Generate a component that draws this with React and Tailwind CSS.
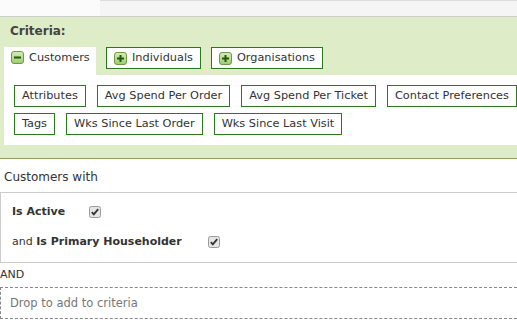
import React from "react";

const font = { fontFamily: '"DejaVu Sans", Verdana, sans-serif' };

const ToggleIcon = ({ open }) => (
  <svg width="13" height="13" viewBox="0 0 13 13" className="shrink-0">
    <defs>
      <linearGradient id={open ? "gm" : "gp"} x1="0" y1="0" x2="0" y2="1">
        <stop offset="0" stopColor="#d7ecb8" />
        <stop offset="1" stopColor="#9fcb6b" />
      </linearGradient>
    </defs>
    <rect x="0.5" y="0.5" width="12" height="12" rx="2.5" fill={`url(#${open ? "gm" : "gp"})`} stroke="#6e9a45" />
    <rect x="3" y="5.5" width="7" height="2" fill="#1d5a12" />
    {!open && <rect x="5.5" y="3" width="2" height="7" fill="#1d5a12" />}
  </svg>
);

const Check = () => (
  <svg width="12" height="12" viewBox="0 0 12 12" className="shrink-0">
    <rect x="0.5" y="0.5" width="11" height="11" rx="2" fill="#e6e6e6" stroke="#9a9a9a" />
    <path d="M2.8 6.2 L4.8 8.3 L9.2 3.2" fill="none" stroke="#333" strokeWidth="1.8" />
  </svg>
);

const fields = [
  ["Attributes", "Avg Spend Per Order", "Avg Spend Per Ticket", "Contact Preferences", "Dates"],
  ["Tags", "Wks Since Last Order", "Wks Since Last Visit"],
];

const App = () => {
  return (
    <div className="w-[517px] h-[329px] overflow-hidden bg-white text-[#333] text-[11.3px]" style={font}>
      <div className="h-[17px] flex border-b border-[#cccccc] bg-[#fbfbfb]">
        <div className="w-[100px]" />
        <div className="flex-1 border-t border-[#dcdcdc] bg-[#f5f5f5]" />
      </div>

      <div className="bg-[#dfecc8] border-b border-[#8e9f5f] pt-[6px] pb-[13px] pl-[4px]">
        <div className="pl-[6px] font-bold text-[12px] text-[#444] leading-[16px]">Criteria:</div>
        <div className="flex items-start gap-[10px] mt-[8px] whitespace-nowrap">
          <div className="bg-white h-[28px] w-[92px] flex items-start pt-[4px] pl-[7px] gap-[5px]">
            <ToggleIcon open />
            <span className="leading-[14px]">Customers</span>
          </div>
          <div className="h-[22px] border border-[#2a7a1c] bg-white flex items-center px-[7px] gap-[5px]">
            <ToggleIcon />
            <span>Individuals</span>
          </div>
          <div className="h-[22px] border border-[#2a7a1c] bg-white flex items-center px-[7px] gap-[5px]">
            <ToggleIcon />
            <span>Organisations</span>
          </div>
        </div>
        <div className="bg-white h-[70px] pt-[10px] pl-[10px] flex flex-col gap-[6px]">
          {fields.map((row, i) => (
            <div key={i} className="flex gap-[11px] whitespace-nowrap">
              {row.map((f) => (
                <div key={f} className="h-[22px] border border-[#2a7a1c] px-[7px] flex items-center shrink-0">
                  {f}
                </div>
              ))}
            </div>
          ))}
        </div>
      </div>

      <div className="pl-[4px] pt-[10px] h-[33px] leading-[16px] text-[12px]">Customers with</div>
      <div className="border border-[#cccccc] border-r-0 h-[71px] pl-[11px] pt-[11px] text-[11px]">
        <div className="flex items-center h-[16px]">
          <span className="font-bold w-[77px]">Is Active</span>
          <Check />
        </div>
        <div className="flex items-center h-[16px] mt-[14px]">
          <span className="w-[196px]">
            and <span className="font-bold">Is Primary Householder</span>
          </span>
          <Check />
        </div>
      </div>
      <div className="h-[24px] pt-[4px] leading-[16px] text-[11px]">AND</div>
      <div className="border border-dashed border-[#888] border-r-0 h-[32px] pl-[9px] pt-[2px] flex items-center text-[#777] text-[11.5px]">
        Drop to add to criteria
      </div>
    </div>
  );
};

export default App;
